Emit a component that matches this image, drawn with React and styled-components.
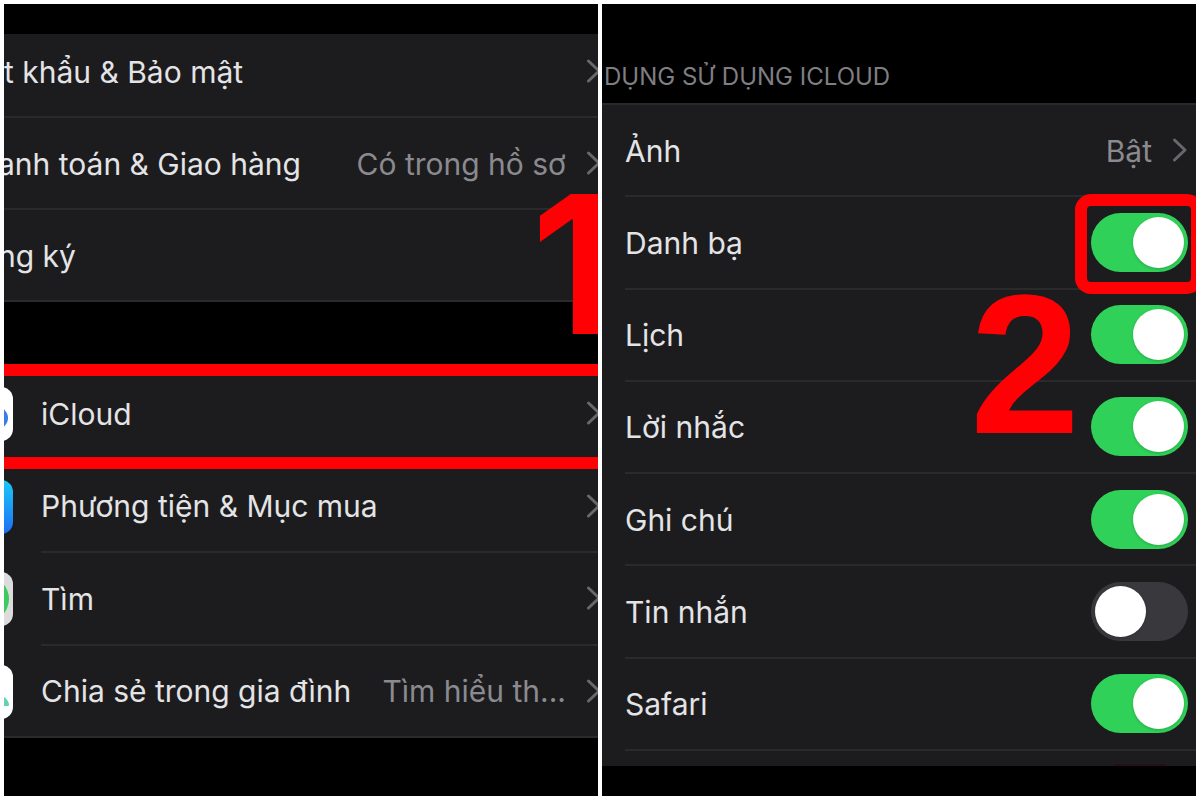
import React, { useState } from "react";
import styled, { createGlobalStyle } from "styled-components";

const GlobalStyle = createGlobalStyle`
  * {
    box-sizing: border-box;
  }

  body {
    margin: 0;
    background-color: #fff;
    font-family: Inter, "Liberation Sans", sans-serif;
    color: #e4e4e6;
  }
`;

const Page = styled.main`
  display: grid;
  grid-template-columns: 1fr 1fr;
  gap: 4px;
  min-height: 100vh;
  padding: 4px;
`;

const Panel = styled.section`
  position: relative;
  display: grid;
  grid-template-rows: ${(props) => props.$rows};
  min-width: 0;
  overflow: hidden;
  background-color: #000;
`;

const List = styled.ul`
  display: grid;
  grid-template-rows: ${(props) => props.$rows};
  min-width: 0;
  margin: 0;
  padding: 0;
  list-style: none;
  background-color: #1c1c1e;
  border-top: ${(props) => (props.$topLine ? "2px solid #29292b" : "none")};
  box-shadow: ${(props) => (props.$bottomLine ? "inset 0 -2px #2a2a2c" : "none")};
`;

const Item = styled.li`
  position: relative;
  display: grid;
  min-width: 0;
  margin-top: ${(props) => (props.$cut ? "-8px" : "0")};
`;

const RowLink = styled.a`
  display: flex;
  gap: 28px;
  min-width: 0;
  margin-left: ${(props) => props.$bleed || "0"};
  margin-right: ${(props) => (props.$wide ? "-4px" : "0")};
  padding-left: ${(props) => props.$indent || "0"};
  color: inherit;
  text-decoration: none;
`;

const RowLabel = styled.label`
  display: flex;
  min-width: 0;
  padding-left: 23px;
  cursor: pointer;
`;

const RowBody = styled.span`
  flex: 1;
  display: flex;
  align-items: center;
  min-width: 0;
  padding-right: ${(props) => (props.$flush ? "0" : "8px")};
  border-bottom: 2px solid #2a2a2c;
`;

const Title = styled.span`
  padding-top: 1px;
  margin-right: auto;
  font-size: 30px;
  line-height: 40px;
  white-space: nowrap;
`;

const Value = styled.span`
  padding-top: 1px;
  margin-right: 20px;
  font-size: 30px;
  line-height: 40px;
  white-space: nowrap;
  color: #8a8a8f;
`;

const AppIcon = styled.svg`
  flex: none;
  align-self: center;
  width: 54px;
  height: 54px;
`;

const ChevronIcon = styled.svg`
  flex: none;
  width: 16px;
  height: 26px;
  fill: none;
  stroke: #68686c;
  stroke-width: 3;
  stroke-linecap: round;
  stroke-linejoin: round;
`;

const SectionTitle = styled.h2`
  align-self: end;
  margin: 0;
  padding: 0 0 10px 2px;
  font-size: 24px;
  font-weight: 400;
  line-height: 32px;
  white-space: nowrap;
  color: #7e7e83;
`;

const Switch = styled.input`
  appearance: none;
  flex: none;
  display: flex;
  align-items: center;
  justify-content: flex-start;
  width: 97px;
  height: 59px;
  margin: 0;
  padding: 4px;
  border-radius: 30px;
  background-color: #39393d;
  cursor: pointer;

  &::before {
    content: "";
    width: 51px;
    height: 51px;
    border-radius: 50%;
    background-color: #fff;
    box-shadow: 0 1px 3px rgba(0, 0, 0, 0.2);
  }

  &:checked {
    justify-content: flex-end;
    background-color: #30d158;
  }
`;

// red marks drawn over the rows
const RowMark = styled.span`
  position: absolute;
  inset: -4px 0 -8px;
  border: solid #ff0005;
  border-width: 12px 0;
  pointer-events: none;
`;

const SwitchMark = styled.span`
  position: absolute;
  top: -3px;
  right: -7px;
  bottom: -4px;
  width: 128px;
  border: 12px solid #ff0005;
  border-radius: 16px;
  pointer-events: none;
`;

const StepNumber = styled.strong`
  position: absolute;
  top: ${(props) => props.$top};
  right: ${(props) => props.$right};
  font-family: ${(props) => props.$font}, Arial, sans-serif;
  font-size: ${(props) => props.$size};
  font-weight: 700;
  line-height: 1;
  color: #ff0005;
  pointer-events: none;
`;

const NextSwitchEdge = styled.span`
  align-self: end;
  justify-self: end;
  width: 52px;
  height: 2px;
  margin-right: 30px;
  background-color: #260f1b;
`;

const Chevron = () => (
  <ChevronIcon viewBox="0 0 16 26" aria-hidden="true">
    <path d="M2.5 3L13 13L2.5 23" />
  </ChevronIcon>
);

const CloudIcon = () => (
  <AppIcon viewBox="0 0 54 54" aria-hidden="true">
    <rect width="54" height="54" rx="12" fill="#fff" />
    <g fill="#3b7bea">
      <circle cx="14" cy="33" r="9" />
      <circle cx="25" cy="24" r="12" />
      <circle cx="38" cy="31" r="11" />
      <rect x="14" y="30" width="24" height="12" />
    </g>
  </AppIcon>
);

const StoreIcon = () => (
  <AppIcon viewBox="0 0 54 54" aria-hidden="true">
    <defs>
      <linearGradient id="store" x1="0" y1="0" x2="0" y2="1">
        <stop offset="0" stopColor="#1cc8fb" />
        <stop offset="1" stopColor="#1d6ff2" />
      </linearGradient>
    </defs>
    <rect width="54" height="54" rx="12" fill="url(#store)" />
    <path d="M29 12L17 34M25 12L37 34M11 32H31M35 32H43" stroke="#fff" strokeWidth="4" strokeLinecap="round" />
  </AppIcon>
);

const FindIcon = () => (
  <AppIcon viewBox="0 0 54 54" aria-hidden="true">
    <rect width="54" height="54" rx="12" fill="#dcdcdc" />
    <circle cx="27" cy="27" r="23" fill="#3ecb5e" />
    <circle cx="27" cy="27" r="8" fill="#2b7de9" stroke="#fff" strokeWidth="3" />
  </AppIcon>
);

const FamilyIcon = () => (
  <AppIcon viewBox="0 0 54 54" aria-hidden="true">
    <rect width="54" height="54" rx="12" fill="#fff" />
    <circle cx="18" cy="19" r="7" fill="#52b8f2" />
    <circle cx="37" cy="22" r="6" fill="#63d3b4" />
    <path d="M5 41c0-16 26-16 26 0z" fill="#52b8f2" />
    <path d="M33 41c0-3-1-6-3-8 6-6 18-3 20 6 0 1 0 2-1 2z" fill="#63d3b4" />
  </AppIcon>
);

const accountRows = [
  { id: "password", title: "t khẩu & Bảo mật", cut: true },
  { id: "payment", title: "anh toán & Giao hàng", value: "Có trong hồ sơ", bleed: "-6px" },
  { id: "subscriptions", title: "ng ký", bleed: "-6px" },
];

const serviceRows = [
  { id: "icloud", title: "iCloud", icon: CloudIcon, marked: true },
  { id: "media", title: "Phương tiện & Mục mua", icon: StoreIcon },
  { id: "find", title: "Tìm", icon: FindIcon },
  { id: "family", title: "Chia sẻ trong gia đình", value: "Tìm hiểu th...", icon: FamilyIcon },
];

const switchRows = [
  { id: "contacts", title: "Danh bạ", marked: true },
  { id: "calendars", title: "Lịch" },
  { id: "reminders", title: "Lời nhắc" },
  { id: "notes", title: "Ghi chú" },
  { id: "messages", title: "Tin nhắn" },
  { id: "safari", title: "Safari" },
];

const AccountPanel = () => (
  <Panel $rows="30px 268fr 66px 370fr 58px">
    <span />
    <List $rows="84fr 92fr 92fr">
      {accountRows.map((row) => (
        <Item key={row.id} $cut={row.cut}>
          <RowLink href={`#${row.id}`} $bleed={row.bleed} $wide>
            <RowBody $flush>
              <Title>{row.title}</Title>
              {row.value && <Value>{row.value}</Value>}
              <Chevron />
            </RowBody>
          </RowLink>
        </Item>
      ))}
    </List>
    <span />
    <List $rows="repeat(4, 1fr)" $bottomLine>
      {serviceRows.map((row) => (
        <Item key={row.id}>
          <RowLink href={`#${row.id}`} $bleed="-45px" $wide>
            <row.icon />
            <RowBody $flush>
              <Title>{row.title}</Title>
              {row.value && <Value>{row.value}</Value>}
              <Chevron />
            </RowBody>
          </RowLink>
          {row.marked && <RowMark />}
        </Item>
      ))}
    </List>
    <StepNumber $font="Inter" $size="192px" $top="164px" $right="-16px">1</StepNumber>
  </Panel>
);

const CloudPanel = () => {
  const [enabled, setEnabled] = useState({
    contacts: true,
    calendars: true,
    reminders: true,
    notes: true,
    messages: false,
    safari: true,
  });

  const toggle = (id) => {
    setEnabled({ ...enabled, [id]: !enabled[id] });
  };

  return (
    <Panel $rows="99px 1fr 30px">
      <SectionTitle>DỤNG SỬ DỤNG ICLOUD</SectionTitle>
      <List $rows="repeat(7, 1fr) 15px" $topLine>
        <Item>
          <RowLink href="#photos" $indent="23px">
            <RowBody>
              <Title>Ảnh</Title>
              <Value>Bật</Value>
              <Chevron />
            </RowBody>
          </RowLink>
        </Item>
        {switchRows.map((row) => (
          <Item key={row.id}>
            <RowLabel htmlFor={row.id}>
              <RowBody>
                <Title>{row.title}</Title>
                <Switch
                  id={row.id}
                  type="checkbox"
                  checked={enabled[row.id]}
                  onChange={() => toggle(row.id)}
                />
              </RowBody>
            </RowLabel>
            {row.marked && <SwitchMark />}
          </Item>
        ))}
        <Item aria-hidden="true">
          <NextSwitchEdge />
        </Item>
      </List>
      <StepNumber $font='"Liberation Sans"' $size="198px" $top="262px" $right="116px">2</StepNumber>
    </Panel>
  );
};

const App = () => {
  return (
    <>
      <GlobalStyle />
      <Page>
        <AccountPanel />
        <CloudPanel />
      </Page>
    </>
  );
};

export default App;
